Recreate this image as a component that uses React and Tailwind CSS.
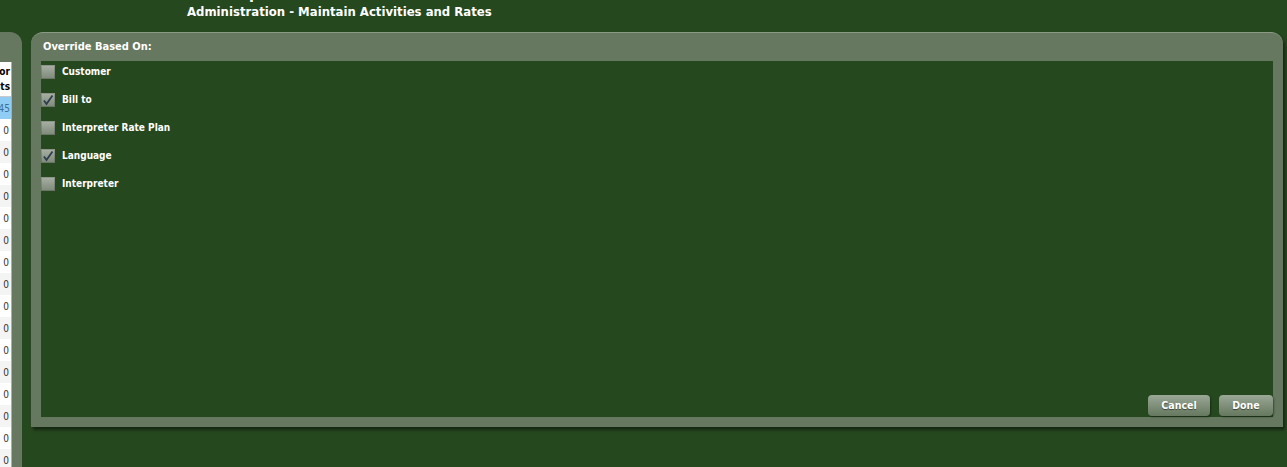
import React, { useState } from 'react'

const options = [
  { id: 'customer', label: 'Customer', checked: false },
  { id: 'billto', label: 'Bill to', checked: true },
  { id: 'plan', label: 'Interpreter Rate Plan', checked: false },
  { id: 'language', label: 'Language', checked: true },
  { id: 'interpreter', label: 'Interpreter', checked: false },
]

function Check({ checked, onClick }) {
  return (
    <button
      onClick={onClick}
      className="w-[14px] h-[14px] bg-gradient-to-b from-[#a9b1a5] to-[#7d8979] shadow-[inset_0_0_0_1px_rgba(0,0,0,0.15)] flex items-center justify-center"
    >
      {checked && (
        <svg width="12" height="12" viewBox="0 0 12 12">
          <path d="M2 6.5 L4.5 10 L10.5 1.5" fill="none" stroke="#2c3d4c" strokeWidth="1.8" />
        </svg>
      )}
    </button>
  )
}

export default function App() {
  const [opts, setOpts] = useState(options)
  const toggle = (id) => setOpts(o => o.map(x => x.id === id ? { ...x, checked: !x.checked } : x))
  const rows = Array.from({ length: 16 })

  return (
    <div className="w-[1287px] h-[467px] overflow-hidden bg-[#26481f] font-['DejaVu_Sans_Condensed','DejaVu_Sans',sans-serif] text-white">
      <div className="h-[32px] relative">
        <div className="h-[5px] overflow-hidden pl-[249px]">
          <div className="-mt-[14px] text-[16px] font-bold leading-[16px]">p</div>
        </div>
        <div className="pl-[187px] text-[13px] font-bold leading-[16px] -mt-[1px]">Administration - Maintain Activities and Rates</div>
      </div>

      <div className="flex gap-[9px] items-start">
        {/* left panel, mostly off screen */}
        <div className="w-[22px] h-[440px] bg-[#66785f] rounded-tr-[12px] pt-[30px] pr-[10px]">
          <div className="w-[12px] h-full bg-white border-r border-[#a9b0a6] overflow-hidden text-[10px] text-black">
            <div className="h-[35px] border-b border-[#c9c9c9] flex flex-col items-end font-bold leading-[15px] pt-[2px]">
              <div className="flex justify-end w-full whitespace-nowrap pr-[1px]">Vendor</div>
              <div className="flex justify-end w-full whitespace-nowrap pr-[1px]">Amounts</div>
            </div>
            <div className="h-[22px] bg-[#8fcdf5] text-[#3f6f98] flex items-center justify-end whitespace-nowrap pr-[1px]">12.45</div>
            {rows.map((_, i) => (
              <div key={i} className={`h-[22px] flex items-center justify-end pr-[2px] text-[#333] ${i % 2 ? 'bg-[#f4f4f4]' : 'bg-white'}`}>0</div>
            ))}
          </div>
        </div>

        {/* main panel */}
        <div className="w-[1252px] bg-[#66785f] rounded-t-[12px] shadow-[2px_3px_3px_rgba(0,0,0,0.45)] border-t border-[#8a9a84]">
          <div className="h-[28px] flex items-center pl-[12px] text-[11px] font-bold">Override Based On:</div>
          <div className="mx-[10px] h-[356px] bg-[#26481f] flex flex-col justify-between">
            <div className="flex flex-col gap-[14px] pt-[4px]">
              {opts.map(o => (
                <div key={o.id} className="flex items-center gap-[7px] h-[14px]">
                  <Check checked={o.checked} onClick={() => toggle(o.id)} />
                  <span className="text-[10px] font-bold leading-none -mt-[1px]">{o.label}</span>
                </div>
              ))}
            </div>
            <div className="flex justify-end gap-[9px] pb-[1px]">
              <button className="w-[62px] h-[21px] rounded-[4px] bg-gradient-to-b from-[#9aa896] to-[#66785f] text-[10.5px] font-bold shadow-[1px_1px_2px_rgba(0,0,0,0.4)] [text-shadow:0_1px_1px_rgba(0,0,0,0.5)]">Cancel</button>
              <button className="w-[54px] h-[21px] rounded-[4px] bg-gradient-to-b from-[#9aa896] to-[#66785f] text-[10.5px] font-bold shadow-[1px_1px_2px_rgba(0,0,0,0.4)] [text-shadow:0_1px_1px_rgba(0,0,0,0.5)]">Done</button>
            </div>
          </div>
          <div className="h-[10px]" />
        </div>
      </div>
    </div>
  )
}
